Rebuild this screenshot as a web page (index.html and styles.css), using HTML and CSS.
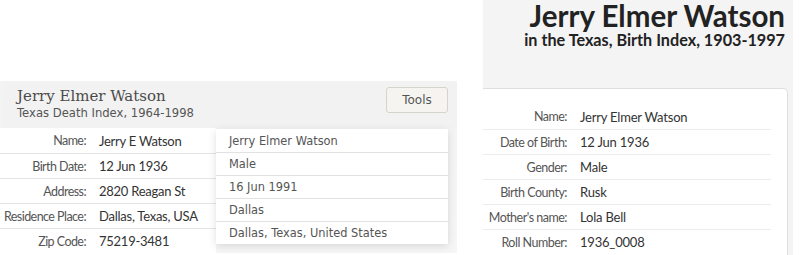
FILE: index.html
```html
<!DOCTYPE html>
<html>
<head>
<meta charset="utf-8">
<link rel="stylesheet" href="styles.css">
</head>
<body>
<div class="page">
  <section class="death">
    <header class="death-head">
      <div class="death-titles">
        <h1 class="death-title">Jerry Elmer Watson</h1>
        <div class="death-sub">Texas Death Index, 1964-1998</div>
      </div>
      <button class="tools">Tools</button>
    </header>
    <div class="death-body">
      <div class="facts">
        <div class="fact"><span class="fl">Name:</span><span class="fv">Jerry E Watson</span></div>
        <div class="fact"><span class="fl">Birth Date:</span><span class="fv">12 Jun 1936</span></div>
        <div class="fact"><span class="fl">Address:</span><span class="fv">2820 Reagan St</span></div>
        <div class="fact"><span class="fl">Residence Place:</span><span class="fv">Dallas, Texas, USA</span></div>
        <div class="fact"><span class="fl">Zip Code:</span><span class="fv">75219-3481</span></div>
      </div>
      <div class="orig">
        <div class="orow">Jerry Elmer Watson</div>
        <div class="orow">Male</div>
        <div class="orow">16 Jun 1991</div>
        <div class="orow">Dallas</div>
        <div class="orow">Dallas, Texas, United States</div>
      </div>
    </div>
  </section>
  <section class="birth">
    <header class="birth-head">
      <h1 class="birth-title">Jerry Elmer Watson</h1>
      <div class="birth-sub">in the Texas, Birth Index, 1903-1997</div>
    </header>
    <div class="birth-card">
      <div class="brow"><span class="bl">Name:</span><span class="bv">Jerry Elmer Watson</span></div>
      <div class="brow"><span class="bl">Date of Birth:</span><span class="bv">12 Jun 1936</span></div>
      <div class="brow"><span class="bl">Gender:</span><span class="bv">Male</span></div>
      <div class="brow"><span class="bl">Birth County:</span><span class="bv">Rusk</span></div>
      <div class="brow"><span class="bl">Mother's name:</span><span class="bv">Lola Bell</span></div>
      <div class="brow"><span class="bl">Roll Number:</span><span class="bv">1936_0008</span></div>
    </div>
  </section>
</div>
</body>
</html>
```

FILE: styles.css
```css
* { box-sizing: border-box; }
html, body { margin: 0; padding: 0; background: #fff; }
body { width: 800px; height: 255px; overflow: hidden; }

.page {
  display: flex;
  align-items: flex-start;
}

/* ---------- left: death index ---------- */
.death {
  width: 457px;
  margin-top: 81px;
  height: 172px;
  background: linear-gradient(#f3f3f3, #f6f6f6);
}
.death-head {
  margin-left: 3px;
  height: 47px;
  background: #f2f2f2;
  display: flex;
  justify-content: space-between;
  align-items: flex-start;
  padding: 6px 9px 0 14px;
}
.death-title {
  margin: 0;
  font-family: "DejaVu Serif", serif;
  font-weight: normal;
  font-size: 15px;
  line-height: 18px;
  color: #4a4a4a;
}
.death-sub {
  font-family: "DejaVu Sans", sans-serif;
  font-size: 11.6px;
  line-height: 17px;
  color: #555;
}
.tools {
  width: 62px;
  height: 26px;
  background: #f5f4f0;
  border: 1px solid #d6d3cb;
  border-radius: 3px;
  font-family: "DejaVu Sans", sans-serif;
  font-size: 12px;
  color: #555;
  padding: 0;
}

.death-body {
  display: flex;
  align-items: flex-start;
}
.facts {
  width: 216px;
  background: #fff;
}
.fact {
  display: flex;
  align-items: center;
  height: 25px;
  border-top: 1px solid #e4e4e4;
  font-family: Lato, sans-serif;
  white-space: nowrap;
}
.fact:first-child { border-top: none; }
.fl {
  flex: none;
  width: 86px;
  display: flex;
  justify-content: flex-end;
  font-size: 12.5px;
  letter-spacing: -0.55px;
  color: #555;
}
.fv {
  padding-left: 13px;
  font-size: 13px;
  letter-spacing: -0.25px;
  color: #333;
}
.orig {
  width: 232px;
  margin-top: 1px;
  background: #fff;
  box-shadow: 0 2px 8px rgba(0,0,0,0.13);
}
.orow {
  height: 23px;
  display: flex;
  align-items: center;
  padding-left: 13px;
  border-top: 1px solid #e2e2e2;
  font-family: "DejaVu Sans", sans-serif;
  font-size: 11.4px;
  color: #555;
}
.orow:first-child { border-top: none; }

/* ---------- right: birth index ---------- */
.birth {
  width: 310px;
  margin-left: 26px;
  height: 255px;
  background: #f4f4f4;
}
.birth-head {
  height: 88px;
  text-align: right;
  padding: 0 8px 0 0;
  font-family: Lato, sans-serif;
  color: #222;
}
.birth-title {
  margin: 0;
  font-size: 29.5px;
  font-weight: bold;
  line-height: 32px;
}
.birth-sub {
  font-size: 16.2px;
  font-weight: bold;
  line-height: 16px;
}
.birth-card {
  width: 305px;
  height: 167px;
  background: #fff;
  border-top: 1px solid #dedede;
  border-right: 1px solid #dedede;
  border-top-right-radius: 5px;
  padding: 15px 16px 0 0;
}
.brow {
  display: flex;
  align-items: center;
  height: 25px;
  border-top: 1px solid #ececec;
  font-family: Lato, sans-serif;
  white-space: nowrap;
}
.brow:first-child { border-top: none; }
.bl {
  flex: none;
  width: 84px;
  display: flex;
  justify-content: flex-end;
  font-size: 12.5px;
  letter-spacing: -0.5px;
  color: #555;
}
.bv {
  padding-left: 13px;
  font-size: 13px;
  letter-spacing: -0.2px;
  color: #333;
}
```
